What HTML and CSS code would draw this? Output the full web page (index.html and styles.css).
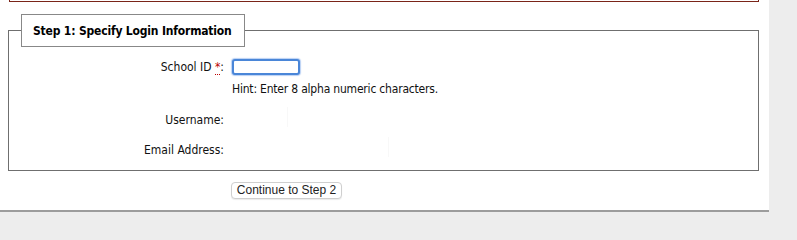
FILE: index.html
```html
<!DOCTYPE html>
<html lang="en">
<head>
<meta charset="utf-8">
<title>Step 1: Specify Login Information</title>
<link rel="stylesheet" href="styles.css">
</head>
<body>
<div class="page">
  <div class="top-box"></div>
  <form class="login-form">
    <fieldset class="step">
      <legend class="step-legend">Step 1: Specify Login Information</legend>
      <div class="fields">
        <label class="field-label row-school" for="school">School ID <abbr class="req" title="required">*</abbr>:</label>
        <div class="field-value row-school"><input id="school" class="text-input" type="text"></div>
        <div class="hint">Hint: Enter 8 alpha numeric characters.</div>
        <label class="field-label row-user">Username:</label>
        <div class="field-value row-user"><span class="ghost ghost-user"></span></div>
        <label class="field-label row-email">Email Address:</label>
        <div class="field-value row-email"><span class="ghost ghost-email"></span></div>
      </div>
    </fieldset>
    <div class="actions">
      <button type="button" class="continue-btn">Continue to Step 2</button>
    </div>
  </form>
</div>
</body>
</html>
```

FILE: styles.css
```css
html, body {
  margin: 0;
  padding: 0;
}
body {
  background: #ededed;
  font-family: "DejaVu Sans Condensed", "DejaVu Sans", sans-serif;
  font-size: 12px;
  color: #111;
}
.page {
  width: 769px;
  height: 210px;
  background: #fff;
  border-bottom: 2px solid #9c9c9c;
}
.top-box {
  margin-left: 9px;
  width: 748px;
  height: 1px;
  border: 1px solid #7a2418;
  border-top: 0;
}
.login-form {
  margin: 0;
}
.step {
  margin: 12px 10px 0 8px;
  padding: 0 12px 13px 12px;
  border: 1px solid #6f6f6f;
  min-width: 0;
}
.step-legend {
  padding: 9px 12px 8px 11px;
  border: 1px solid #888;
  background: #fff;
  font-weight: bold;
  font-size: 12px;
  letter-spacing: -0.18px;
  line-height: 14px;
  color: #000;
}
.fields {
  display: grid;
  grid-template-columns: 203px 1fr;
  column-gap: 8px;
  grid-template-rows: 16px 21px 31px 30px;
  margin-top: 12px;
}
.field-label {
  grid-column: 1;
  text-align: right;
  align-self: center;
  line-height: 14px;
  color: #111;
}
.field-value {
  grid-column: 2;
  align-self: stretch;
  display: flex;
  align-items: center;
}
.row-school { grid-row: 1; }
.row-user { grid-row: 3; align-self: end; }
.row-email { grid-row: 4; align-self: end; }
.field-value.row-user, .field-value.row-email { height: 20px; }
.req {
  color: #b00;
  text-decoration: none;
  border-bottom: 1px dotted #b00;
  cursor: help;
}
.text-input {
  box-sizing: border-box;
  width: 68px;
  height: 16px;
  margin: 0;
  padding: 0 2px;
  border: 2px solid #4a86d8;
  border-radius: 3px;
  box-shadow: 0 0 1px 1px rgba(100, 150, 230, 0.45);
  background: #fff;
  outline: none;
}
.hint {
  grid-column: 2;
  grid-row: 2;
  align-self: end;
  line-height: 14px;
  letter-spacing: -0.2px;
  color: #111;
}
.ghost {
  display: block;
  height: 20px;
  border-right: 1px solid #f8f8f8;
}
.ghost-user { width: 55px; }
.ghost-email { width: 156px; }
.actions {
  padding: 11px 0 0 231px;
}
.continue-btn {
  box-sizing: border-box;
  height: 17px;
  width: 111px;
  padding: 0;
  margin: 0;
  border: 1px solid #cfcfcf;
  border-radius: 4px;
  background: #fff;
  box-shadow: 0 1px 1px rgba(0, 0, 0, 0.08);
  font-family: "Liberation Sans", Arial, sans-serif;
  font-size: 12px;
  line-height: 15px;
  color: #222;
}
```
